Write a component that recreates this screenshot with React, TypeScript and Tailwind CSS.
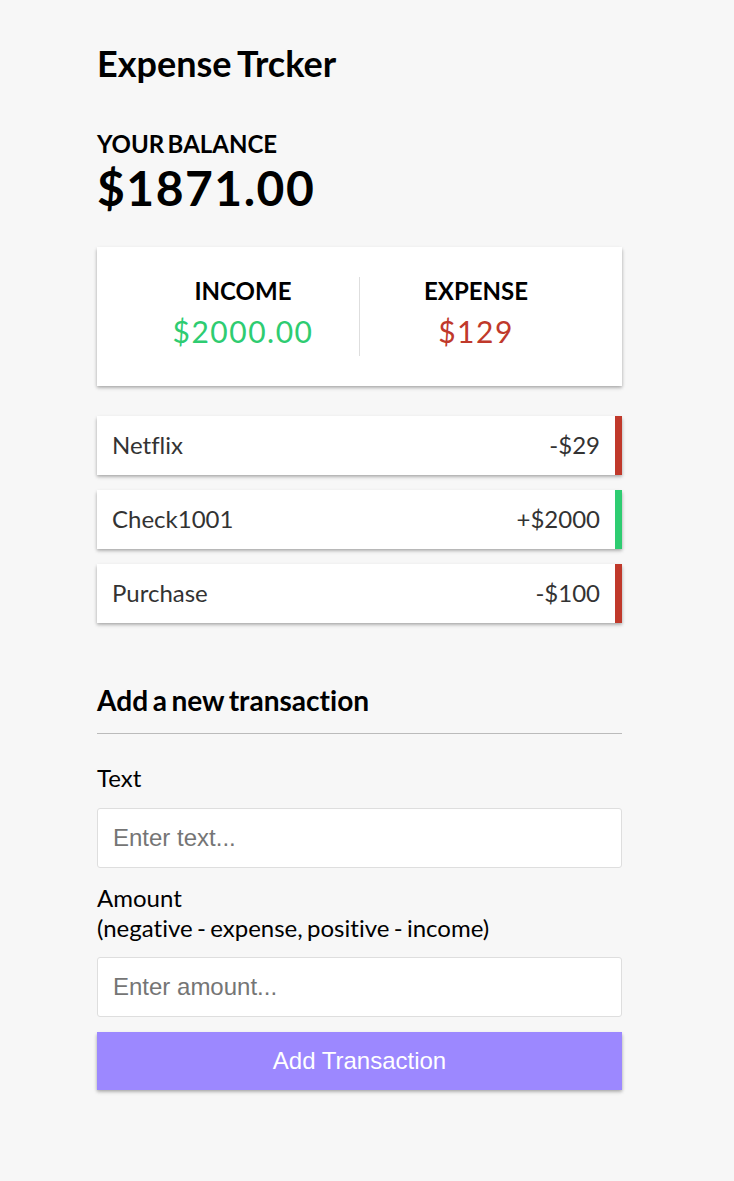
import React from "react";

const shadow =
  "shadow-[0_1.5px_4.5px_rgba(0,0,0,0.12),0_1.5px_3px_rgba(0,0,0,0.24)]";

type Tx = { text: string; amount: string; plus: boolean };

const txs: Tx[] = [
  { text: "Netflix", amount: "-$29", plus: false },
  { text: "Check1001", amount: "+$2000", plus: true },
  { text: "Purchase", amount: "-$100", plus: false },
];

const inputCls =
  "block h-[60px] w-full rounded-[3px] border border-[#dedede] bg-white px-[15px] font-['Liberation_Sans',Arial,sans-serif] text-[24px] leading-[27.6px] text-black placeholder:text-[#757575]";

export default function App() {
  return (
    <div className="min-h-screen bg-[#f7f7f7] font-['Lato','Noto_Sans',sans-serif] text-black [font-variant-ligatures:none]">
      <div className="w-[719px] pt-[42px] pb-[45px]">
        <div className="mx-auto w-[525px]">
          <h2 className="text-[36px] font-bold leading-[43.2px] [word-spacing:-0.06em]">
            Expense Trcker
          </h2>

          <h4 className="mt-[45px] text-[24px] font-bold uppercase leading-[28.8px] [word-spacing:-0.1em]">
            Your Balance
          </h4>
          <h1 className="text-[48px] font-bold leading-[57.6px] tracking-[1.5px]">
            $1871.00
          </h1>

          <div className={`mt-[30px] flex bg-white p-[30px] ${shadow}`}>
            <div className="flex-1 border-r border-[#dedede] text-center">
              <h4 className="text-[24px] font-bold uppercase leading-[28.8px]">Income</h4>
              <p className="my-[7.5px] text-[30px] leading-[36px] tracking-[1.5px] text-[#2ecc71]">
                $2000.00
              </p>
            </div>
            <div className="flex-1 text-center">
              <h4 className="text-[24px] font-bold uppercase leading-[28.8px]">Expense</h4>
              <p className="my-[7.5px] text-[30px] leading-[36px] tracking-[1.5px] text-[#c0392b]">
                $129
              </p>
            </div>
          </div>

          <ul className="mt-[30px] flex flex-col gap-[15px]">
            {txs.map((t) => (
              <li
                key={t.text}
                className={`flex justify-between bg-white p-[15px] text-[24px] leading-[28.8px] text-[#333] ${shadow} border-r-[7.5px] ${
                  t.plus ? "border-[#2ecc71]" : "border-[#c0392b]"
                }`}
              >
                <span>{t.text}</span>
                <span>{t.amount}</span>
              </li>
            ))}
          </ul>

          <h3 className="mt-[61.5px] border-b border-[#bbb] pb-[15px] text-[28.08px] font-bold leading-[33.7px] [word-spacing:-0.08em]">
            Add a new transaction
          </h3>

          <form className="flex flex-col pt-[15px]" onSubmit={(e) => e.preventDefault()}>
            <label className="mt-[15.5px] mb-[15px] block text-[24px] leading-[28.8px]">Text</label>
            <input type="text" placeholder="Enter text..." className={inputCls} />
            <label className="my-[15px] block text-[24px] leading-[29.5px] [word-spacing:-0.075em]">
              Amount <br />
              (negative - expense, positive - income)
            </label>
            <input type="number" placeholder="Enter amount..." className={inputCls} />
            <button
              type="submit"
              className={`mt-[15px] block h-[58px] w-full bg-[#9c88ff] px-[15px] font-['Liberation_Sans',Arial,sans-serif] text-[24px] leading-[27.6px] text-white ${shadow}`}
            >
              Add Transaction
            </button>
          </form>
        </div>
      </div>
    </div>
  );
}
